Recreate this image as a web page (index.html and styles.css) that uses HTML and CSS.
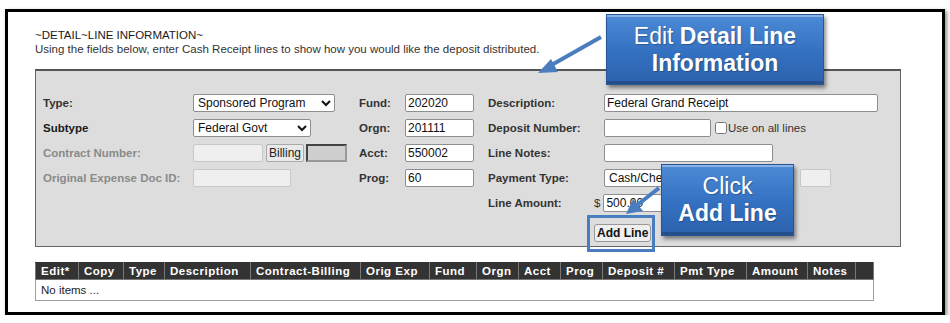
FILE: index.html
```html
<!DOCTYPE html>
<html lang="en">
<head>
  <meta charset="UTF-8">
  <title>Detail Line Information</title>
  <link rel="stylesheet" href="styles.css">
</head>
<body>
  <div class="frame">
    <div class="section-title">~DETAIL~LINE INFORMATION~</div>
    <div class="section-help">Using the fields below, enter Cash Receipt lines to show how you would like the deposit distributed.</div>

    <!-- Detail line entry panel -->
    <div class="panel">
      <label class="lbl">Type:</label>
      <div class="fld"><select class="sel-type"><option>Sponsored Program</option></select></div>
      <label class="lbl">Fund:</label>
      <div class="fld"><input type="text" class="w-short" value="202020"></div>
      <label class="lbl">Description:</label>
      <div class="fld"><input type="text" class="w-desc" value="Federal Grand Receipt"></div>

      <label class="lbl lbl-dark">Subtype</label>
      <div class="fld"><select class="sel-sub"><option>Federal Govt</option></select></div>
      <label class="lbl">Orgn:</label>
      <div class="fld"><input type="text" class="w-short" value="201111"></div>
      <label class="lbl">Deposit Number:</label>
      <div class="fld">
        <input type="text" class="w-dep">
        <input type="checkbox" class="chk" id="useAll"><span class="chk-text">Use on all lines</span>
      </div>

      <label class="lbl lbl-off">Contract Number:</label>
      <div class="fld">
        <input type="text" class="w-contract" disabled>
        <button type="button" class="btn-billing">Billing</button>
        <span class="billing-box"></span>
      </div>
      <label class="lbl">Acct:</label>
      <div class="fld"><input type="text" class="w-short" value="550002"></div>
      <label class="lbl">Line Notes:</label>
      <div class="fld"><input type="text" class="w-notes"></div>

      <label class="lbl lbl-off">Original Expense Doc ID:</label>
      <div class="fld"><input type="text" class="w-orig" disabled></div>
      <label class="lbl">Prog:</label>
      <div class="fld"><input type="text" class="w-short" value="60"></div>
      <label class="lbl">Payment Type:</label>
      <div class="fld">
        <select class="sel-pay"><option>Cash/Check</option></select>
        <input type="text" class="w-paybox" disabled>
      </div>

      <label class="lbl col5">Line Amount:</label>
      <div class="fld fld-shift"><span class="dollar">$</span><input type="text" class="w-amount" value="500.00"></div>

      <div class="fld fld-shift col6 add-row"><button type="button" class="btn-add">Add Line</button></div>
    </div>

    <table class="lines">
      <colgroup>
        <col style="width:43px"><col style="width:45px"><col style="width:41px"><col style="width:86px">
        <col style="width:110px"><col style="width:69px"><col style="width:47px"><col style="width:42px">
        <col style="width:42px"><col style="width:42px"><col style="width:72px"><col style="width:72px">
        <col style="width:61px"><col style="width:48px"><col style="width:18px">
      </colgroup>
      <thead>
        <tr>
          <th>Edit*</th><th>Copy</th><th>Type</th><th>Description</th><th>Contract-Billing</th>
          <th>Orig Exp</th><th>Fund</th><th>Orgn</th><th>Acct</th><th>Prog</th>
          <th>Deposit #</th><th>Pmt Type</th><th>Amount</th><th>Notes</th><th></th>
        </tr>
      </thead>
      <tbody>
        <tr><td colspan="15">No items ...</td></tr>
      </tbody>
    </table>

    <!-- Tutorial overlays -->
    <svg class="arrows" width="934" height="300" viewBox="0 0 934 300">
      <line x1="593" y1="25" x2="540" y2="55" stroke="#4a7dbf" stroke-width="4"/>
      <polygon points="530,61 543,47 550,60" fill="#4a7dbf"/>
      <line x1="651" y1="176" x2="628" y2="194" stroke="#4a7dbf" stroke-width="4"/>
      <polygon points="618,202 625,187 635,199" fill="#4a7dbf"/>
    </svg>
    <div class="callout callout-edit">Edit <b>Detail Line</b><br><b>Information</b></div>
    <div class="highlight"></div>
    <div class="callout callout-add">Click<br><b>Add Line</b></div>
  </div>
</body>
</html>
```

FILE: styles.css
```css
body {
  margin: 0;
  background: #fff;
  font-family: 'Liberation Sans', Arial, sans-serif;
  font-size: 11.5px;
  color: #333;
}
.frame {
  position: relative;
  box-sizing: border-box;
  width: 940px;
  height: 306px;
  margin: 9px 0 0 5px;
  padding: 16px 0 0 27px;
  border: 3px solid #000;
  box-shadow: 2px 2px 4px rgba(0,0,0,0.45);
}
.section-title { line-height: 14px; color: #1a1a1a; }
.section-help { line-height: 14px; color: #333; }

.panel {
  box-sizing: border-box;
  width: 866px;
  margin-top: 13px;
  padding: 19px 0 6px 7px;
  background: #dddddd;
  border: 1px solid #666;
  border-top: 2px solid #555;
  display: grid;
  grid-template-columns: 150px 166px 46px 83px 116px 1fr;
  grid-auto-rows: 25px;
  align-items: center;
}
.panel .col5 { grid-column: 5; }
.panel .col6 { grid-column: 6; }
.lbl { font-weight: bold; color: #333; }
.lbl-dark { color: #1a1a1a; }
.lbl-off { color: #8a8a8a; }
.fld { display: flex; align-items: center; }
.fld-shift { margin-left: -10px; }
.add-row { margin-top: 10px; }

input[type="text"], select {
  box-sizing: border-box;
  height: 18px;
  margin: 0;
  padding: 0 2px;
  font-family: 'Liberation Sans', Arial, sans-serif;
  font-size: 12px;
  color: #111;
  background: #fff;
  border: 1px solid #8f8f8f;
  border-radius: 2px;
}
input[type="text"]:disabled {
  background: #efefef;
  border-color: #c8c8c8;
}
select { padding: 0; }
.sel-type { width: 142px; }
.sel-sub { width: 118px; }
.sel-pay { width: 188px; }
.w-short { width: 69px; }
.w-desc { width: 274px; }
.w-dep { width: 107px; }
.w-notes { width: 169px; }
.w-contract { width: 70px; }
.w-orig { width: 98px; }
.w-paybox { width: 31px; margin-left: 8px !important; }
.w-amount { width: 120px; }

.chk { width: 12px; height: 12px; margin: 0 0 0 4px; }
.chk-text { margin-left: 1px; color: #333; }
.btn-billing {
  height: 18px;
  margin-left: 3px;
  padding: 0 2px;
  font-family: 'Liberation Sans', Arial, sans-serif;
  font-size: 12px;
  color: #222;
  background: #e9e9e9;
  border: 1px solid #aaa;
  border-radius: 2px;
}
.billing-box {
  box-sizing: border-box;
  width: 41px;
  height: 18px;
  margin-left: 2px;
  background: #cfcfcf;
  border: 2px solid #444;
  border-right-color: #999;
  border-bottom-color: #999;
}
.dollar { margin-right: 3px; color: #333; }
.btn-add {
  height: 18px;
  padding: 0 2px;
  font-family: 'Liberation Sans', Arial, sans-serif;
  font-size: 12px;
  font-weight: bold;
  color: #111;
  background: #efefef;
  border: 1px solid #999;
  border-radius: 3px;
}

.lines {
  margin-top: 15px;
  width: 838px;
  table-layout: fixed;
  border-collapse: collapse;
}
.lines th {
  height: 16px;
  line-height: 14px;
  padding: 0 0 0 5px;
  background: #333;
  color: #fff;
  font-weight: bold;
  letter-spacing: 0.5px;
  text-align: left;
  white-space: nowrap;
  border: 1px solid #777;
  border-top-color: #333;
}
.lines td {
  height: 20px;
  padding: 0 5px;
  color: #222;
  border: 1px solid #a0a0a0;
}

.arrows { position: absolute; left: 0; top: 0; }
.callout {
  position: absolute;
  box-sizing: border-box;
  color: #fff;
  font-size: 23px;
  line-height: 27px;
  text-align: center;
  background: linear-gradient(#4c8ad6, #3470c0 55%, #2c62ad);
  border: 1px solid #285596;
  box-shadow: inset 0 2px 0 rgba(255,255,255,0.35), inset 0 -3px 0 rgba(0,0,0,0.2), 2px 3px 4px rgba(0,0,0,0.45);
  text-shadow: 1px 1px 1px rgba(0,0,0,0.25);
}
.callout-edit { left: 598px; top: 2px; width: 218px; height: 71px; padding-top: 8px; }
.callout-add { left: 653px; top: 152px; width: 133px; height: 72px; padding-top: 8px; }
.highlight {
  position: absolute;
  left: 579px;
  top: 203px;
  width: 68px;
  height: 37px;
  box-sizing: border-box;
  border: 3px solid #4a7dbf;
}
```
